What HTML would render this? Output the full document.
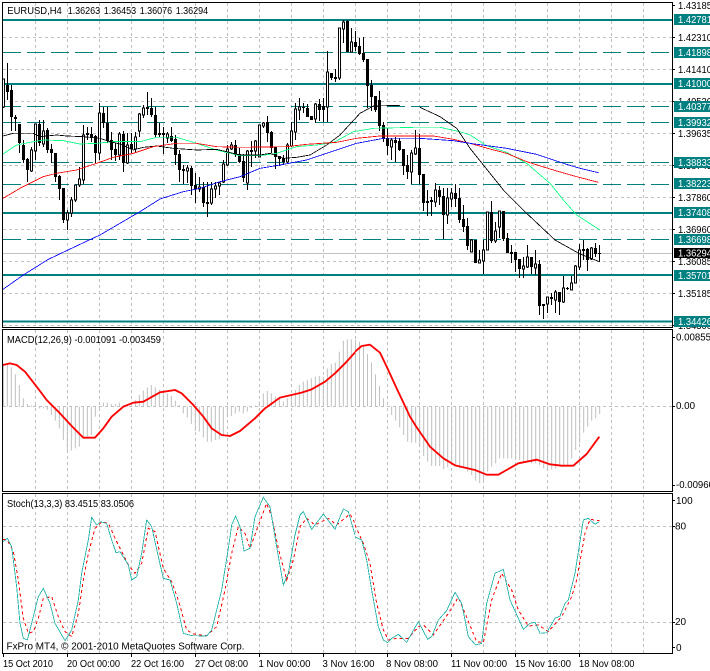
<!DOCTYPE html>
<html><head><meta charset="utf-8"><style>
html,body{margin:0;padding:0;background:#fff;width:710px;height:671px;overflow:hidden}
svg{display:block;font-family:"Liberation Sans",sans-serif;font-size:10px}
.g{stroke:#c0c0c0;stroke-width:1;stroke-dasharray:3 3;fill:none}
.t{stroke:#008080;fill:none}
.l{fill:none;shape-rendering:crispEdges}
.w{fill:#fff}
</style></head><body>
<svg width="710" height="671" viewBox="0 0 710 671" xmlns="http://www.w3.org/2000/svg">
<rect width="710" height="671" fill="#fff"/>
<!-- vertical grid -->
<path class="g" d="M35.5 3V327M67.5 3V327M99.5 3V327M131.5 3V327M163.5 3V327M195.5 3V327M227.5 3V327M259.5 3V327M291.5 3V327M323.5 3V327M355.5 3V327M387.5 3V327M419.5 3V327M451.5 3V327M483.5 3V327M515.5 3V327M547.5 3V327M579.5 3V327M611.5 3V327M643.5 3V327"/>
<path class="g" d="M35.5 330V491M67.5 330V491M99.5 330V491M131.5 330V491M163.5 330V491M195.5 330V491M227.5 330V491M259.5 330V491M291.5 330V491M323.5 330V491M355.5 330V491M387.5 330V491M419.5 330V491M451.5 330V491M483.5 330V491M515.5 330V491M547.5 330V491M579.5 330V491M611.5 330V491M643.5 330V491"/>
<path class="g" d="M35.5 494V653M67.5 494V653M99.5 494V653M131.5 494V653M163.5 494V653M195.5 494V653M227.5 494V653M259.5 494V653M291.5 494V653M323.5 494V653M355.5 494V653M387.5 494V653M419.5 494V653M451.5 494V653M483.5 494V653M515.5 494V653M547.5 494V653M579.5 494V653M611.5 494V653M643.5 494V653"/>
<!-- horizontal grid -->
<path class="g" d="M3 37.5H672M3 69.5H672M3 101.5H672M3 133.5H672M3 165.5H672M3 197.5H672M3 229.5H672M3 261.5H672M3 293.5H672M3 325.5H672M3 406.5H672M3 526.5H672M3 622.5H672"/>
<!-- current price line -->
<path d="M3 253.5H672" stroke="#c0c0c0" fill="none"/>
<!-- level lines -->
<path class="t" stroke-width="2" d="M3 20H672M3 84H672M3 213H672M3 275H672M3 321.5H672"/>
<path class="t" stroke-dasharray="18 6" d="M3 52.5H672M3 106.5H672M3 122.5H672M3 162.5H672M3 184.5H672M3 239.5H672"/>
<!-- MACD histogram -->
<g transform="translate(0,330) scale(.33333)"><path d="M10 230V100M22 230V100M34 230V112M46 230V133M58 230V165M70 230V205M82 230V222M94 230V226M106 230V225M118 230V235M130 230V235M142 230V240M154 230V255M166 230V272M178 230V295M190 230V330M202 230V360M214 230V362M226 230V355M238 230V350M250 230V320M262 230V320M274 230V315M286 230V260M298 230V234M310 230V218M322 230V218M334 230V222M346 230V222M358 230V218M370 230V225M382 230V225M394 230V222M406 230V210M418 230V195M430 230V182M442 230V172M454 230V165M466 230V172M478 230V180M490 230V185M502 230V190M514 230V198M526 230V212M538 230V225M550 230V250M562 230V262M574 230V282M586 230V303M598 230V305M610 230V322M622 230V335M634 230V335M646 230V330M658 230V328M670 230V315M682 230V262M694 230V258M706 230V250M718 230V245M730 230V250M742 230V245M754 230V234M766 230V226M778 230V215M790 230V190M802 230V183M814 230V190M826 230V200M838 230V205M850 230V215M862 230V205M874 230V195M886 230V180M898 230V165M910 230V155M922 230V150M934 230V145M946 230V140M958 230V138M970 230V140M982 230V115M994 230V102M1006 230V98M1018 230V65M1030 230V32M1042 230V28M1054 230V28" stroke="#c0c0c0" stroke-width="3" fill="none"/></g>
<g transform="translate(355,330) scale(.33333)"><path d="M1.5 229V30M13.5 229V35M25.5 229V50M37.5 229V72M49.5 229V98M61.5 229V133M73.5 229V168M85.5 229V205M110 229V255M122 229V272M134 229V292M146 229V315M158 229V335M170 229V338M182 229V338M194 229V350M206 229V378M218 229V395M230 229V408M242 229V408M254 229V408M266 229V418M278 229V412M290 229V405M302 229V410M314 229V415M326 229V415M338 229V425M350 229V435M362 229V452M374 229V460M386 229V450M398 229V425M410 229V410M422 229V400M434 229V385M446 229V385M458 229V385M470 229V385M482 229V390M494 229V390M506 229V395M518 229V395M530 229V400M542 229V400M554 229V405M566 229V415M578 229V420M590 229V418M602 229V415M614 229V410M626 229V410M638 229V405M650 229V385M662 229V360M674 229V340M686 229V308M698 229V290M710 229V272M722 229V265M734 229V252" stroke="#c0c0c0" stroke-width="3" fill="none"/></g>
<!-- MACD signal -->
<g transform="translate(0,330) scale(.33333)"><polyline fill="none" stroke="#f00" stroke-width="5.5" stroke-linejoin="round" points="9,105 30,100 50,105 75,125 110,170 140,210 180,250 215,288 250,323 285,323 310,295 335,260 370,230 400,218 430,215 480,187 525,180 545,190 580,225 610,260 635,295 665,315 690,318 720,303 765,265 795,235 840,203 905,188 935,178 975,155 1005,130 1040,95 1065,67"/></g>
<g transform="translate(355,330) scale(.33333)"><polyline fill="none" stroke="#f00" stroke-width="5.5" stroke-linejoin="round" points="0,65 20,48 45,44 75,68 95,110 125,175 165,260 185,292 225,350 265,385 300,406 360,420 395,434 430,434 490,400 545,389 585,403 620,407 655,407 695,372 733,320"/></g>
<!-- Stochastic -->
<g transform="translate(0,490) scale(.33333)">
<polyline class="l" stroke="#f00" stroke-width="3" stroke-dasharray="9 9" points="9,148 22,150 40,185 55,270 70,385 85,430 100,425 115,385 130,325 155,320 175,380 195,425 215,440 235,370 250,270 265,190 285,115 305,95 325,100 350,155 385,225 405,250 425,220 445,115 465,125 490,235 515,275 535,330 560,420 580,432 620,437 650,410 675,300 695,190 715,110 735,130 750,175 770,120 800,40 815,80 835,175 860,270 880,210 900,110 920,85 945,105 985,85 1010,105 1050,72 1065,100"/>
<polyline class="l" stroke="#20b2aa" stroke-width="2.6" points="9,155 22,145 35,170 50,290 60,400 70,445 82,450 95,400 115,320 130,295 150,340 165,400 195,452 215,420 235,330 245,250 265,150 275,82 290,105 300,95 320,100 335,150 348,188 360,185 385,225 395,270 410,260 425,190 440,90 455,110 475,200 490,265 510,270 530,340 550,430 575,437 620,438 635,420 665,300 685,175 695,105 707,78 720,110 732,183 750,175 765,80 790,22 810,50 830,170 850,285 865,250 885,135 900,75 910,65 935,118 970,72 1005,118 1030,57 1045,65 1065,135"/>
</g>
<g transform="translate(355,490) scale(.33333)">
<polyline class="l" stroke="#f00" stroke-width="3" stroke-dasharray="9 9" points="0,105 25,160 45,220 65,340 85,420 100,450 125,445 160,445 190,410 205,405 235,435 280,370 310,322 330,370 365,455 385,458 410,330 440,250 470,300 490,360 520,408 550,405 580,425 620,380 650,320 665,270 690,130 705,88 733,92"/>
<polyline class="l" stroke="#20b2aa" stroke-width="2.6" points="0,140 20,150 35,210 50,300 70,410 85,450 98,458 110,445 130,433 155,457 190,395 218,448 230,440 250,390 275,362 300,307 320,340 340,440 362,465 380,460 395,340 420,250 445,238 465,330 505,418 525,400 540,397 555,430 575,428 600,385 615,378 630,340 640,330 660,250 685,90 700,85 720,103 733,95"/>
</g>
<!-- wicks -->
<path stroke="#000" fill="none" d="M3.5 79V108M7.5 63V100M11.5 85V131M15.5 115V131M19.5 124V153M23.5 140V163M27.5 158V182M31.5 147V172M35.5 124V160M39.5 120V146M43.5 120V147M47.5 128V153M51.5 144V163M55.5 153V182M59.5 175V200M63.5 188V223M67.5 210V230M71.5 197V217M75.5 185V202M79.5 167V187M83.5 125V184M87.5 127V140M91.5 127V142M95.5 135V163M99.5 103V160M103.5 107V128M107.5 107V143M111.5 132V160M115.5 143V161M119.5 132V160M123.5 131V172M127.5 133V164M131.5 133V153M135.5 132V152M139.5 113V137M143.5 105V118M147.5 92V115M151.5 98V117M155.5 107V137M159.5 123V137M163.5 127V154M167.5 132V143M171.5 127V142M175.5 135V165M179.5 150V182M183.5 165V184M187.5 165V183M191.5 166V195M195.5 173V203M199.5 177V192M203.5 182V207M207.5 182V217M211.5 182V205M215.5 182V198M219.5 182V195M223.5 160V183M227.5 145V166M231.5 142V150M235.5 140V157M239.5 148V163M243.5 154V182M247.5 150V190M251.5 141V167M255.5 140V158M259.5 125V157M263.5 122V128M267.5 116V142M271.5 131V153M275.5 147V169M279.5 156V166M283.5 155V165M287.5 143V163M291.5 122V147M295.5 103V140M299.5 98V120M303.5 103V113M307.5 104V117M311.5 116V120M315.5 103V123M319.5 99V121M323.5 98V122M327.5 51V122M331.5 73V80M335.5 69V82M339.5 28V80M343.5 20V43M347.5 20V52M351.5 28V52M355.5 31V51M359.5 38V55M363.5 37V62M367.5 59V108M371.5 80V111M375.5 96V112M379.5 91V131M383.5 122V142M387.5 128V155M391.5 138V160M395.5 137V162M399.5 138V151M403.5 149V175M407.5 155V179M411.5 150V184M415.5 130V155M419.5 134V184M423.5 174V211M427.5 190V216M431.5 197V216M435.5 183V207M439.5 186V205M443.5 188V239M447.5 188V224M451.5 188V207M455.5 184V207M459.5 188V223M463.5 205V232M467.5 218V250M471.5 239V252M475.5 240V263M479.5 250V263M483.5 240V274M487.5 212V250M491.5 201V243M495.5 222V243M499.5 211V238M503.5 211V241M507.5 233V253M511.5 245V263M515.5 252V272M519.5 259V278M523.5 257V278M527.5 245V268M531.5 257V274M535.5 250V275M539.5 260V315M543.5 304V319M547.5 297V313M551.5 293V305M555.5 290V313M559.5 292V315M563.5 276V303M567.5 287V290M571.5 276V290M575.5 265V283M579.5 244V270M583.5 240V260M587.5 248V271M591.5 247V260M595.5 243V257M599.5 245V262"/>
<!-- black bodies -->
<path stroke="#000" stroke-width="3" fill="none" d="M7.5 85V92M11.5 90V117M15.5 117V119M19.5 124V143M23.5 145V160M27.5 159V170M39.5 124V143M47.5 130V150M51.5 149V153M55.5 153V177M59.5 176V189M63.5 188V220M87.5 133V135M91.5 134V138M95.5 136V153M103.5 113V123M107.5 123V141M111.5 140V150M115.5 149V155M123.5 134V163M131.5 144V149M147.5 107V109M151.5 108V115M155.5 115V135M159.5 133V135M163.5 133V135M171.5 136V141M175.5 139V155M179.5 154V170M183.5 169V171M191.5 168V186M195.5 185V189M203.5 187V203M207.5 202V204M235.5 145V155M239.5 154V162M243.5 161V178M251.5 150V152M267.5 122V133M271.5 132V148M275.5 147V157M279.5 156V159M283.5 158V162M303.5 107V108M307.5 108V117M311.5 116V120M319.5 104V110M323.5 106V110M331.5 73V78M335.5 77V79M347.5 21V52M355.5 42V47M359.5 46V54M363.5 53V60M367.5 59V86M371.5 85V97M375.5 96V110M379.5 100V126M383.5 125V139M387.5 138V146M395.5 140V143M399.5 141V150M403.5 149V166M407.5 165V172M419.5 148V175M423.5 174V203M427.5 201V203M431.5 200V202M439.5 190V197M443.5 196V215M455.5 193V199M459.5 198V220M463.5 219V227M467.5 226V246M475.5 240V263M491.5 212V241M503.5 211V239M507.5 238V253M511.5 252V254M515.5 252V260M519.5 259V269M531.5 257V267M539.5 264V306M543.5 304V306M551.5 297V299M559.5 292V302M567.5 288V289M583.5 249V251M587.5 249V260M595.5 248V254M599.5 253V254"/>
<!-- white bodies -->
<path class="w" stroke="#000" d="M2.5 79h2V107h-2zM30.5 150h2V171h-2zM34.5 124h2V151h-2zM42.5 131h2V144h-2zM66.5 213h2V220h-2zM70.5 200h2V213h-2zM74.5 185h2V200h-2zM78.5 179h2V185h-2zM82.5 135h2V180h-2zM98.5 113h2V153h-2zM118.5 134h2V155h-2zM126.5 145h2V163h-2zM134.5 137h2V149h-2zM138.5 114h2V131h-2zM142.5 108h2V115h-2zM166.5 134h2V138h-2zM186.5 168h2V171h-2zM198.5 187h2V189h-2zM210.5 189h2V203h-2zM214.5 186h2V189h-2zM218.5 183h2V186h-2zM222.5 164h2V182h-2zM226.5 149h2V165h-2zM230.5 145h2V149h-2zM246.5 151h2V183h-2zM254.5 141h2V151h-2zM258.5 125h2V157h-2zM262.5 123h2V126h-2zM286.5 145h2V162h-2zM290.5 131h2V146h-2zM294.5 109h2V132h-2zM298.5 107h2V110h-2zM314.5 104h2V119h-2zM326.5 72h2V107h-2zM338.5 28h2V78h-2zM342.5 22h2V29h-2zM350.5 42h2V52h-2zM390.5 140h2V147h-2zM410.5 153h2V172h-2zM414.5 148h2V154h-2zM434.5 190h2V202h-2zM446.5 198h2V215h-2zM450.5 193h2V199h-2zM470.5 240h2V252h-2zM478.5 260h2V263h-2zM482.5 250h2V261h-2zM486.5 212h2V250h-2zM494.5 231h2V241h-2zM498.5 211h2V227h-2zM522.5 266h2V269h-2zM526.5 257h2V267h-2zM534.5 264h2V268h-2zM546.5 297h2V304h-2zM554.5 292h2V300h-2zM562.5 288h2V302h-2zM570.5 283h2V290h-2zM574.5 266h2V283h-2zM578.5 250h2V267h-2zM590.5 248h2V259h-2z"/>
<!-- moving averages -->
<g transform="scale(.33333)">
<polyline class="l" stroke="#00ff7f" stroke-width="2.5" points="9,462 50,435 100,425 130,420 190,422 240,432 290,430 340,425 420,425 470,412 530,412 590,430 650,450 720,467 780,467 830,460 890,440 950,435 1000,428 1060,395 1120,385 1240,382 1320,382 1380,395 1410,405 1460,437 1520,457 1580,490 1650,550 1690,600 1730,645 1800,690"/>
<polyline class="l" stroke="#000" stroke-width="2.5" points="9,408 40,400 100,400 120,410 170,405 200,408 250,410 300,415 330,425 360,432 400,450 430,442 470,438 520,445 590,450 650,448 720,465 780,465 810,460 850,475 890,472 930,465 980,435 1020,405 1080,340 1120,318 1200,316"/>
<polyline class="l" stroke="#000" stroke-width="2.5" points="1260,322 1320,350 1370,385 1410,445 1450,495 1510,570 1540,600 1580,640 1665,720 1740,762 1798,785"/>
<polyline class="l" stroke="#f00" stroke-width="2.5" points="9,595 60,565 130,530 170,520 230,510 290,490 340,472 400,460 460,440 530,430 590,430 650,440 720,442 860,440 920,433 1010,427 1070,415 1140,408 1300,408 1360,418 1410,430 1470,447 1520,460 1580,485 1660,510 1730,530 1795,547"/>
<polyline class="l" stroke="#00f" stroke-width="2.5" points="9,868 70,825 145,778 240,733 300,705 420,635 480,597 550,575 600,565 660,545 720,530 780,505 840,495 920,480 1010,450 1070,430 1150,415 1260,415 1360,422 1410,430 1520,445 1610,463 1690,490 1740,505 1795,518"/>
</g>
<!-- frames -->
<path stroke="#000" fill="none" d="M2.5 2.5H672.5V327.5H2.5ZM2.5 329.5H672.5V491.5H2.5ZM2.5 493.5H672.5V653.5H2.5Z"/>
<!-- ticks -->
<path stroke="#000" fill="none" d="M672 5.5h3M672 37.5h3M672 69.5h3M672 101.5h3M672 133.5h3M672 165.5h3M672 197.5h3M672 229.5h3M672 261.5h3M672 293.5h3M672 325.5h3M672 337.5h3M672 406.5h3M672 485.5h3M672 500.5h3M672 526.5h3M672 622.5h3M672 647.5h3M3.5 654v3M67.5 654v3M131.5 654v3M195.5 654v3M259.5 654v3M323.5 654v3M387.5 654v3M451.5 654v3M515.5 654v3M579.5 654v3"/>
<!-- axis labels -->
<g fill="#000" lengthAdjust="spacingAndGlyphs">
<text x="678" y="9" textLength="34" lengthAdjust="spacingAndGlyphs">1.43185</text><text x="678" y="41" textLength="34" lengthAdjust="spacingAndGlyphs">1.42310</text><text x="678" y="73" textLength="34" lengthAdjust="spacingAndGlyphs">1.41410</text><text x="678" y="105" textLength="34" lengthAdjust="spacingAndGlyphs">1.40530</text><text x="678" y="137" textLength="34" lengthAdjust="spacingAndGlyphs">1.39635</text><text x="678" y="169" textLength="34" lengthAdjust="spacingAndGlyphs">1.38745</text><text x="678" y="201" textLength="34" lengthAdjust="spacingAndGlyphs">1.37860</text><text x="678" y="233" textLength="34" lengthAdjust="spacingAndGlyphs">1.36960</text><text x="678" y="265" textLength="34" lengthAdjust="spacingAndGlyphs">1.36085</text><text x="678" y="297" textLength="34" lengthAdjust="spacingAndGlyphs">1.35185</text><text x="678" y="329" textLength="34" lengthAdjust="spacingAndGlyphs">1.34300</text>
<text x="676" y="340.5" textLength="35" lengthAdjust="spacingAndGlyphs">0.00855</text><text x="676" y="409" textLength="19" lengthAdjust="spacingAndGlyphs">0.00</text><text x="676" y="488" textLength="38" lengthAdjust="spacingAndGlyphs">-0.00960</text>
<text x="676" y="504">100</text><text x="675" y="529.5">80</text><text x="675" y="625">20</text><text x="676" y="651">0</text>
</g>
<!-- boxes -->
<g fill="#008080"><rect x="674" y="14" width="36" height="11"/><rect x="674" y="47" width="36" height="11"/><rect x="674" y="78" width="36" height="11"/><rect x="674" y="101" width="36" height="11"/><rect x="674" y="117" width="36" height="11"/><rect x="674" y="157" width="36" height="11"/><rect x="674" y="178" width="36" height="11"/><rect x="674" y="207" width="36" height="11"/><rect x="674" y="234" width="36" height="11"/><rect x="674" y="270" width="36" height="11"/><rect x="674" y="316" width="36" height="11"/></g>
<rect x="674" y="248" width="36" height="10" fill="#000"/>
<g fill="#fff">
<text x="678" y="23" textLength="34" lengthAdjust="spacingAndGlyphs">1.42781</text><text x="678" y="56" textLength="34" lengthAdjust="spacingAndGlyphs">1.41898</text><text x="678" y="87" textLength="34" lengthAdjust="spacingAndGlyphs">1.41000</text><text x="678" y="110" textLength="34" lengthAdjust="spacingAndGlyphs">1.40377</text><text x="678" y="126" textLength="34" lengthAdjust="spacingAndGlyphs">1.39932</text><text x="678" y="166" textLength="34" lengthAdjust="spacingAndGlyphs">1.38833</text><text x="678" y="187" textLength="34" lengthAdjust="spacingAndGlyphs">1.38223</text><text x="678" y="216" textLength="34" lengthAdjust="spacingAndGlyphs">1.37408</text><text x="678" y="243" textLength="34" lengthAdjust="spacingAndGlyphs">1.36698</text><text x="678" y="279" textLength="34" lengthAdjust="spacingAndGlyphs">1.35701</text><text x="678" y="325" textLength="34" lengthAdjust="spacingAndGlyphs">1.34426</text><text x="678" y="256.5" textLength="34" lengthAdjust="spacingAndGlyphs">1.36294</text>
</g>
<!-- titles -->
<g fill="#000">
<text x="7.3" y="14" textLength="54.5" lengthAdjust="spacingAndGlyphs">EURUSD,H4</text><text x="67.7" y="14" textLength="32.5" lengthAdjust="spacingAndGlyphs">1.36263</text><text x="103.7" y="14" textLength="32.5" lengthAdjust="spacingAndGlyphs">1.36453</text><text x="139.7" y="14" textLength="32.5" lengthAdjust="spacingAndGlyphs">1.36076</text><text x="175.7" y="14" textLength="32.5" lengthAdjust="spacingAndGlyphs">1.36294</text>
<text x="7" y="343" textLength="154" lengthAdjust="spacingAndGlyphs">MACD(12,26,9) -0.001091 -0.003459</text>
<text x="7" y="507" textLength="127" lengthAdjust="spacingAndGlyphs">Stoch(13,3,3) 83.4515 83.0506</text>
<text x="6.5" y="649.5" textLength="238" lengthAdjust="spacingAndGlyphs">FxPro MT4, © 2001-2010 MetaQuotes Software Corp.</text>
<text x="3" y="667" textLength="50" lengthAdjust="spacingAndGlyphs">15 Oct 2010</text><text x="67" y="667" textLength="53" lengthAdjust="spacingAndGlyphs">20 Oct 00:00</text><text x="131" y="667" textLength="53" lengthAdjust="spacingAndGlyphs">22 Oct 16:00</text><text x="195" y="667" textLength="53" lengthAdjust="spacingAndGlyphs">27 Oct 08:00</text><text x="258.5" y="667" textLength="52" lengthAdjust="spacingAndGlyphs">1 Nov 00:00</text><text x="322.5" y="667" textLength="52" lengthAdjust="spacingAndGlyphs">3 Nov 16:00</text><text x="386" y="667" textLength="52" lengthAdjust="spacingAndGlyphs">8 Nov 08:00</text><text x="451" y="667" textLength="56" lengthAdjust="spacingAndGlyphs">11 Nov 00:00</text><text x="515" y="667" textLength="56" lengthAdjust="spacingAndGlyphs">15 Nov 16:00</text><text x="579" y="667" textLength="55.5" lengthAdjust="spacingAndGlyphs">18 Nov 08:00</text>
</g>
</svg>
</body></html>
